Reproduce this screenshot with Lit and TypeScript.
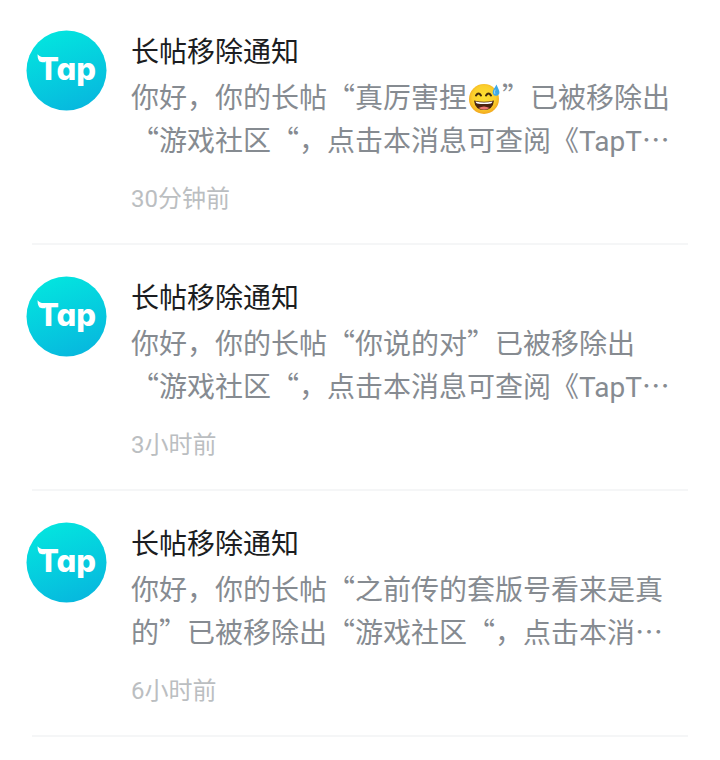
import { LitElement, html, css, svg } from "lit";
import { customElement, property } from "lit/decorators.js";

interface Notice {
  title: string;
  body: unknown;
  count: number;
  unit: string;
}

const sweatSmile = html`<svg class="emoji" viewBox="0 0 35 32" role="img" aria-label="苦笑">
  <defs>
    <radialGradient id="face" cx="0.5" cy="0.45" r="0.55">
      <stop offset="0" stop-color="#fde030" />
      <stop offset="0.7" stop-color="#fbcf2c" />
      <stop offset="1" stop-color="#f2a61f" />
    </radialGradient>
  </defs>
  <circle cx="17" cy="17" r="15" fill="url(#face)" />
  <path d="M9 13.500q2.500-4 5 0M19 13.500q2.500-4 5 0" fill="none" stroke="#422b0d" stroke-width="2" stroke-linecap="round" />
  <path d="M7 18.500q10 2.500 20 0q-1 9.500-10 9.500t-10-9.500z" fill="#4a2410" />
  <path d="M8.500 19.500q8.500 1.800 17 0q-.3 1.500-1.500 2q-7 1.200-14 0q-1.200-.5-1.500-2z" fill="#fff" />
  <path d="M11.500 26q5.500-3 11 0q-5.500 3.600-11 0z" fill="#ed7770" />
  <path d="M29.500 2.500c-1.500 3-4 5.500-3.800 8.200c.2 2.200 2 3.300 3.600 3.100c2-.2 3.300-1.800 3.100-3.800c-.2-2.500-1.900-4.500-2.900-7.500z" fill="#3fa9e8" />
  <path d="M28 8q-1 2-.3 3.500" fill="none" stroke="#a5dcfb" stroke-width="1" stroke-linecap="round" />
</svg>`;

const tapName = html`<span class="latin">TapT</span>`;

const notices: Notice[] = [
  {
    title: "长帖移除通知",
    body: html`你好，你的长帖“真厉害捏${sweatSmile}”已被移除出“游戏社区“，点击本消息可查阅《${tapName}…`,
    count: 30,
    unit: "分钟前",
  },
  {
    title: "长帖移除通知",
    body: html`你好，你的长帖“你说的对”已被移除出“游戏社区“，点击本消息可查阅《${tapName}…`,
    count: 3,
    unit: "小时前",
  },
  {
    title: "长帖移除通知",
    body: "你好，你的长帖“之前传的套版号看来是真的”已被移除出“游戏社区“，点击本消…",
    count: 6,
    unit: "小时前",
  },
];

@customElement("tap-avatar")
export class TapAvatar extends LitElement {
  static styles = css`
    :host {
      display: block;
      flex: none;
      width: 80px;
      height: 80px;
    }
    .logo {
      display: block;
      width: 100%;
      height: 100%;
      overflow: visible;
    }
    .word {
      font: 800 31px Inter, "Open Sans", sans-serif;
      font-feature-settings: "cv11";
      fill: #fff;
    }
  `;

  render() {
    return html`<svg class="logo" viewBox="0 0 80 80" role="img" aria-label="Tap">
      ${svg`
        <defs>
          <linearGradient id="sky" x1="0.3" y1="0" x2="0.7" y2="1">
            <stop offset="0" stop-color="#03e5df" />
            <stop offset="1" stop-color="#07b7de" />
          </linearGradient>
        </defs>
        <circle cx="40.5" cy="40.500" r="40" fill="url(#sky)" />
        <path d="M11.500 24.200q3 3.300 8 3.300v4.700h-3.500q-4.500-.6-4.500-8z" fill="#fff" />
        <text class="word" x="12" y="50">Tap</text>
      `}
    </svg>`;
  }
}

@customElement("notice-item")
export class NoticeItem extends LitElement {
  @property({ attribute: false }) notice!: Notice;

  static styles = css`
    :host {
      display: block;
    }
    .item {
      display: flex;
      gap: 25px;
      padding: 30px 32px 28px 26px;
    }
    .content {
      flex: 1;
      min-width: 0;
    }
    .title {
      margin: 0;
      font-size: 28px;
      font-weight: 400;
      line-height: 40px;
      color: #1b1d21;
    }
    .body {
      margin: 5px 0 0;
      font-size: 28px;
      line-height: 43px;
      color: #868b91;
    }
    .latin {
      font-family: Roboto, "Liberation Sans", sans-serif;
      line-height: 1;
    }
    .emoji {
      width: 35px;
      height: 32px;
      vertical-align: -6px;
    }
    .time {
      display: block;
      margin-top: 18px;
      font-size: 24px;
      line-height: 36px;
      color: #bbbec1;
    }
    .rule {
      height: 2px;
      margin: 0 32px 1px;
      border: 0;
      background: #f5f6f7;
    }
  `;

  render() {
    const { title, body, count, unit } = this.notice;
    return html`
      <article class="item">
        <tap-avatar></tap-avatar>
        <div class="content">
          <h2 class="title">${title}</h2>
          <p class="body">${body}</p>
          <time class="time"><span class="latin">${count}</span>${unit}</time>
        </div>
      </article>
      <hr class="rule" />
    `;
  }
}

@customElement("app-root")
export class AppRoot extends LitElement {
  static styles = css`
    :host {
      display: block;
      min-height: 100vh;
      background: #fff;
      font-family: "Noto Sans CJK SC", "Noto Sans", sans-serif;
      font-weight: 400;
      text-spacing-trim: space-all;
    }
  `;

  render() {
    return html`<main lang="zh-CN">
      ${notices.map((notice) => html`<notice-item .notice=${notice}></notice-item>`)}
    </main>`;
  }
}
